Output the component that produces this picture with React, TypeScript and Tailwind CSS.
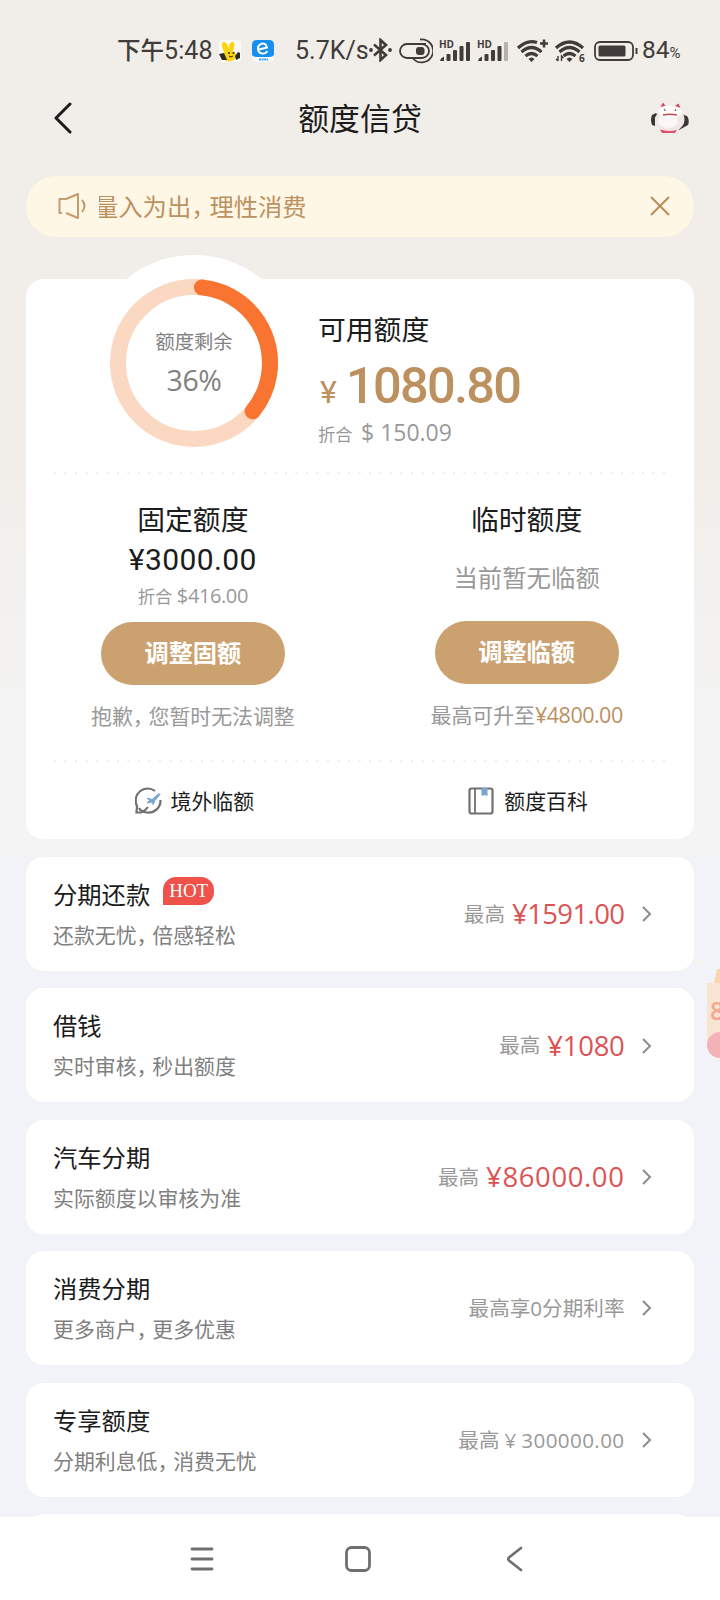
import { useState } from 'react'
import type { ReactNode } from 'react'

interface Product {
  id: string
  title: string
  desc: [string, string?]
  hot?: boolean
  amount?: string
  amountClass?: string
  note: ReactNode
}

const products: Product[] = [
  {
    id: 'installment',
    title: '分期还款',
    desc: ['还款无忧', '倍感轻松'],
    hot: true,
    amount: '1591.00',
    amountClass: 'tracking-[-0.6px]',
    note: '最高',
  },
  {
    id: 'loan',
    title: '借钱',
    desc: ['实时审核', '秒出额度'],
    amount: '1080',
    amountClass: 'tracking-[-0.3px]',
    note: '最高',
  },
  {
    id: 'car',
    title: '汽车分期',
    desc: ['实际额度以审核为准'],
    amount: '86000.00',
    amountClass: 'tracking-[0.6px]',
    note: '最高',
  },
  { id: 'shopping', title: '消费分期', desc: ['更多商户', '更多优惠'], note: '最高享0分期利率' },
  {
    id: 'exclusive',
    title: '专享额度',
    desc: ['分期利息低', '消费无忧'],
    note: (
      <>
        最高<span className="ml-[5px]">¥</span>
        <span className="ml-[5px] tracking-[0.4px]">300000.00</span>
      </>
    ),
  },
]

// Full-width comma set in a narrower cell
function Comma() {
  return <span className="mr-[0.25em] [font-feature-settings:'halt']">，</span>
}

function Signal({ weak = false }: { weak?: boolean }) {
  return (
    <svg className="overflow-visible" width="32" height="22" viewBox="0 0 32 22" fill="#413c39">
      <text x="0" y="7.5" fontSize="10" fontWeight="700" fontFamily="Open Sans" textLength="15">
        HD
      </text>
      <path d="M2 18.500l3-2v4.500h-4z" />
      <rect x="7.5" y="14" width="4" height="7" rx="1" />
      <rect x="14" y="10" width="4" height="11" rx="1" />
      <rect x="20.5" y="6" width="4" height="15" rx="1" />
      <rect x="27" y="2" width="4" height="19" rx="1" fill={weak ? '#b5b0ac' : '#413c39'} />
    </svg>
  )
}

function Wifi({ six = false }: { six?: boolean }) {
  return (
    <svg className="overflow-visible" width="32" height="24" viewBox="0 0 32 24" fill="none" stroke="#413c39" strokeWidth="3.2">
      <path d={six ? 'M1 9 Q14.500 -3 28 9' : 'M1 9 Q10.500 0 20 3.500'} />
      <path d="M4.500 13 Q14.500 4 24.500 13" />
      <path d="M8.500 17 Q14.500 12 20.500 17" />
      <path d="M11.500 20 Q14.500 17 17.500 20 L14.500 23Z" fill="#413c39" stroke="none" />
      {six ? (
        <>
          <path d="M3 17v5M1 20l2 2M6.500 22v-5l2 2" strokeWidth="1.400" />
          <text x="24" y="23" fontSize="10" fontWeight="700" fontFamily="Open Sans" fill="#413c39" stroke="none">
            6
          </text>
        </>
      ) : (
        <path d="M27 0.500v8M23 4.500h8" strokeWidth="2.600" />
      )}
    </svg>
  )
}

function StatusBar() {
  return (
    <div className="flex h-[74px] items-center pl-[117px] pt-[27px] font-['Roboto','Noto_Sans_CJK_SC',sans-serif] text-[#413c39]">
      <div className="w-[102px] whitespace-nowrap text-[23.5px] font-medium leading-6">
        下午<span className="text-[25px] font-normal tracking-[0.1px]">5:48</span>
      </div>
      <svg width="22" height="22" viewBox="0 0 22 22">
        <rect width="22" height="22" rx="4" fill="#fbfaf6" />
        <path d="M5 12 C2 5 2 2 5 2 C7.500 2 9 5 9.500 9 C10 4 11 2 13.500 2 C17 2 15 8 14 11 C17 13 19 16 15 20 C12 22 7 22 5 19 C3 17 4 14 5 12Z" fill="#fbd515" />
        <path d="M0 14 L5 13 L8 20 L3 20Z" fill="#2d2924" />
        <path d="M19 12 l2 1 v5 l-4 2 -1-4Z" fill="#2d2924" />
        <circle cx="10" cy="13" r="1" fill="#2d2924" />
        <circle cx="14.500" cy="13" r="1" fill="#2d2924" />
        <path d="M10 16 q2 2 4 0" stroke="#2d2924" fill="none" />
      </svg>
      <svg className="ml-[11px]" width="22" height="22" viewBox="0 0 22 22">
        <rect width="22" height="22" rx="5" fill="#f8fbff" />
        <path d="M0 5 Q0 0 5 0 H17 Q22 0 22 5 V14 Q22 17 17 17 H5 Q0 17 0 14Z" fill="#168fee" />
        <path d="M7 9.500 L15 7.500 C14 3 10 2.500 7.500 5 C4.500 8 6 13 10 13.500 C12.500 14 14.500 12.500 15.500 11" fill="none" stroke="#fff" strokeWidth="1.900" />
        <path d="M7 19.500h9" stroke="#38a3f3" strokeWidth="2" strokeDasharray="2 .6" />
      </svg>
      <div className="ml-[21px] w-[74px] whitespace-nowrap text-[25px] leading-6">5.7K/s</div>
      <svg className="mt-[-1px]" width="23" height="24" viewBox="0 0 23 24" fill="none" stroke="#413c39" strokeWidth="2.6">
        <path d="M5 6.500 L17 17 L11.500 22 V2 L17 7 L5 17.500" />
        <circle cx="2" cy="12" r="1.900" fill="#413c39" stroke="none" />
        <circle cx="21" cy="12" r="1.900" fill="#413c39" stroke="none" />
      </svg>
      <svg className="ml-[7px]" width="34" height="26" viewBox="0 0 34 26" fill="none" stroke="#413c39" strokeWidth="1.8">
        <path d="M27 6 H8 a7 7 0 0 0 0 14 H23 a7 7 0 0 0 0-14" />
        <path d="M21 1.500 a11.500 11.500 0 1 1 -7 19" />
        <rect x="17" y="9" width="8.500" height="8" rx="3" fill="#413c39" stroke="none" />
      </svg>
      <div className="ml-[6px] flex gap-[6px]">
        <Signal />
        <Signal weak />
      </div>
      <div className="ml-[8px] flex gap-[6px]">
        <Wifi />
        <Wifi six />
      </div>
      <svg className="ml-[7px]" width="46" height="20" viewBox="0 0 46 20" fill="none">
        <rect x="1" y="1" width="38" height="18" rx="5" stroke="#413c39" strokeWidth="1.8" />
        <rect x="4.500" y="4.500" width="27" height="11" rx="1.500" fill="#413c39" />
        <path d="M42.500 7v6" stroke="#413c39" strokeWidth="2" />
      </svg>
      <div className="ml-[2px] mt-[2px] whitespace-nowrap text-[24.5px] leading-6">
        84<span className="text-[15px]">%</span>
      </div>
    </div>
  )
}

function LuckyCat() {
  return (
    <svg width="40" height="32" viewBox="0 0 40 32">
      <path d="M6 11 L2 13 Q0 17 2 23 L5 24 V15 L8 13Z" fill="#3a3739" />
      <path d="M31 12 L37 14 Q40 18 38 23 L29 28 L28 25 L34 21 V17Z" fill="#3a3739" />
      <ellipse cx="20" cy="17.500" rx="14.500" ry="12.500" fill="#f0e6e3" />
      <path d="M10 9 L12 1 L17 4 L25 4 L29 2 L31 10Z" fill="#faf5f4" />
      <path d="M10.500 5 L13 0.500 L15.500 4Z M25 4 L28.500 1.500 L30.500 6Z" fill="#d64563" />
      <ellipse cx="20" cy="10" rx="12" ry="6.500" fill="#fdfafa" />
      <ellipse cx="18" cy="19" rx="10" ry="7" fill="#fbf7f6" />
      <path d="M13 13 Q20 11.500 27 13" fill="none" stroke="#c04c57" strokeWidth="1.300" />
      <path d="M14 7.500l1.500 1M26 7.500l-1 1.200" stroke="#4b4346" strokeWidth="1.200" />
      <path d="M10 27.500 Q18 30 27 28 L25 31 H12Z" fill="#e0526c" />
    </svg>
  )
}

function Divider() {
  return (
    <svg className="mx-auto block" width="616" height="2">
      <path d="M2 1h612" stroke="#eeeeee" strokeWidth="2" strokeDasharray="2 8.500" />
    </svg>
  )
}

// Progress ring: 0deg is 12 o'clock, the arc runs clockwise
function Ring({ from, to }: { from: number; to: number }) {
  const point = (deg: number) => {
    const a = (deg * Math.PI) / 180
    return `${84 + 76 * Math.sin(a)} ${84 - 76 * Math.cos(a)}`
  }
  return (
    <svg className="col-start-1 row-start-1" width="168" height="168" fill="none" strokeWidth="16">
      <circle cx="84" cy="84" r="76" stroke="#fbd8c1" />
      <path d={`M${point(from)} A76 76 0 0 1 ${point(to)}`} stroke="#f97331" strokeLinecap="round" />
    </svg>
  )
}

function CreditCard() {
  return (
    <section className="mt-[42px] h-[560px] rounded-[18px] bg-white">
      <div className="flex h-[193px]">
        <div className="ml-[60px] mt-[-24px] grid size-[216px] shrink-0 place-items-center rounded-full bg-white">
          <Ring from={6} to={129.5} />
          <div className="col-start-1 row-start-1 -mt-[3px] text-center text-[#818181]">
            <div className="text-[19.3px] leading-6">额度剩余</div>
            <div className="mt-[12px] text-[28.5px] leading-7 tracking-[-0.4px]">36%</div>
          </div>
        </div>
        <div className="ml-[16px] whitespace-nowrap pt-[35px]">
          <div className="text-[27.8px] leading-[30px] text-[#1c1c1c]">可用额度</div>
          <div className="mt-[14px] flex h-[56px] items-baseline font-['Roboto',sans-serif] font-medium leading-[56px] text-[#bc905f]">
            <span className="w-[28px] pl-[2px] text-[32px] font-normal">¥</span>
            <span className="text-[50.5px] tracking-[-1.7px]">1080.80</span>
          </div>
          <div className="mt-[4px] flex items-baseline leading-[28px] text-[#999]">
            <span className="w-[43px] text-[17.3px]">折合</span>
            <span className="text-[23px]">$ 150.09</span>
          </div>
        </div>
      </div>
      <Divider />
      <div className="grid h-[286px] grid-cols-2 whitespace-nowrap text-center">
        <div className="flex flex-col items-center pt-[30px]">
          <div className="text-[27.8px] leading-[30px] text-[#1c1c1c]">固定额度</div>
          <div className="mt-[9px] font-['Roboto',sans-serif] text-[30px] leading-[34px] tracking-[0.4px] text-[#1c1c1c]">
            ¥3000.00
          </div>
          <div className="mt-[6px] text-[17.3px] leading-[26px] text-[#999]">
            折合 <span className="text-[20px] tracking-[-0.4px]">$416.00</span>
          </div>
          <button className="mt-[12px] h-[63px] w-[184px] rounded-full bg-[#cba170] text-[24.2px] font-bold text-white">
            调整固额
          </button>
          <div className="mt-[18px] text-[20.9px] leading-[26px] text-[#999]">
            抱歉
            <Comma />
            您暂时无法调整
          </div>
        </div>
        <div className="flex flex-col items-center pt-[30px]">
          <div className="text-[27.8px] leading-[30px] text-[#1c1c1c]">临时额度</div>
          <div className="mt-[29px] text-[24.4px] leading-[30px] text-[#999]">当前暂无临额</div>
          <button className="mt-[28px] h-[63px] w-[184px] rounded-full bg-[#cba170] text-[24.2px] font-bold text-white">
            调整临额
          </button>
          <div className="mt-[18px] text-[20.9px] leading-[26px] text-[#999]">
            最高可升至<span className="text-[21.5px] tracking-[-0.5px] text-[#bc905f]">¥4800.00</span>
          </div>
        </div>
      </div>
      <Divider />
      <div className="grid h-[77px] grid-cols-2 pl-[2px] pt-px text-[20.9px] leading-none text-[#1c1c1c]">
        <div className="flex items-center justify-center gap-[9px]">
          <svg width="27" height="28" viewBox="0 0 27 28" fill="none" stroke="#707070" strokeWidth="2.2">
            <path d="M20 4 A12 12 0 0 0 2 19 L1.500 25.500 H6 Q11 23 13 20" />
            <path d="M4 21 Q6 25 12 25.500 A12 12 0 0 0 25.500 13" />
            <path d="M12 11 l5 1.500 7-6 1 1-5 6-2 4-1.500-2.500-4.500 1 2.500-2.500Z" fill="#7aa7cf" stroke="#7aa7cf" strokeWidth="1" />
          </svg>
          境外临额
        </div>
        <div className="flex items-center justify-center gap-[10px] pl-[2px]">
          <svg width="26" height="28" viewBox="0 0 26 28" fill="none" stroke="#707070" strokeWidth="2.2">
            <rect x="1.500" y="1.500" width="23" height="25" rx="2" />
            <path d="M7 2v24" strokeWidth="1.800" />
            <path d="M13.500 1h6v8l-3-1-3 1Z" fill="#7aa7cf" stroke="none" />
          </svg>
          额度百科
        </div>
      </div>
    </section>
  )
}

function ProductRow({ product }: { product: Product }) {
  return (
    <div className="flex h-[114px] shrink-0 items-center justify-between whitespace-nowrap rounded-[18px] bg-white pl-[27px] pr-[42px]">
      <div>
        <div className="flex h-[34px] items-center pt-px text-[24.3px] text-[#1c1c1c]">
          {product.title}
          {product.hot && (
            <span className="mb-[8px] ml-[13px] flex h-[28px] w-[51px] items-center justify-center rounded-[13px] rounded-bl-none bg-[#ee524b] pt-px font-['Liberation_Serif',serif] text-[19px] text-white">
              HOT
            </span>
          )}
        </div>
        <div className="mt-[8px] text-[20.9px] leading-[30px] text-[#808080]">
          {product.desc[0]}
          {product.desc[1] && <Comma />}
          {product.desc[1]}
        </div>
      </div>
      <div className="flex items-center pt-px">
        <div className="flex items-center text-[20.6px] text-[#999]">
          {product.note}
          {product.amount && (
            <span className={`ml-[7px] text-[27.5px] leading-8 text-[#dd5353] ${product.amountClass}`}>¥{product.amount}</span>
          )}
        </div>
        <svg className="ml-[17px]" width="10" height="16" fill="none" stroke="#8c8c8c" strokeWidth="2">
          <path d="M1 1l7 7-7 7" />
        </svg>
      </div>
    </div>
  )
}

export default function App() {
  const [showNotice, setShowNotice] = useState(true)

  return (
    <main className="relative flex h-[1600px] w-[720px] flex-col overflow-hidden bg-[linear-gradient(#f1ede8_0px,#f1ede8_400px,#f4f4f4_740px,#f4f4f4_850px,#f2f3f8_862px)] font-['Open_Sans','Noto_Sans_CJK_SC',sans-serif]">
      <StatusBar />
      <header className="grid h-[88px] grid-cols-[1fr_auto_1fr] items-center pl-[53px] pr-[30px]">
        <svg width="20" height="32" fill="none" stroke="#1c1c1c" strokeWidth="3" strokeLinecap="round" strokeLinejoin="round">
          <path d="M17 2L3 16l14 14" />
        </svg>
        <h1 className="-ml-[23px] text-[30.9px] leading-none text-[#1c1c1c]">额度信贷</h1>
        <div className="justify-self-end">
          <LuckyCat />
        </div>
      </header>

      <div className="ml-[26px] mr-[26.500px] mt-[13.500px] flex h-[1341px] flex-col overflow-hidden">
        {showNotice && (
          <div className="flex h-[61.500px] shrink-0 items-center rounded-full bg-[#fff7e5] pl-[32px] pr-[24px] text-[24.3px] text-[#bb9162]">
            <svg width="30" height="28" viewBox="0 0 30 28" fill="none" stroke="#c39c70" strokeWidth="2">
              <path d="M4 21H1.500V7H8L20 2V26L8 21" strokeLinejoin="round" />
              <path d="M24 8q5 6 0 12" />
            </svg>
            <div className="ml-[11px] flex-1 overflow-hidden whitespace-nowrap pt-px">
              <span className="-ml-[5px]">量入为出</span>
              <Comma />
              理性消费
            </div>
            <button onClick={() => setShowNotice(false)}>
              <svg width="20" height="20" fill="none" stroke="#b98e5c" strokeWidth="2">
                <path d="M1 1l18 18M19 1L1 19" />
              </svg>
            </button>
          </div>
        )}
        <CreditCard />
        <div className="mt-[17.500px] flex flex-col gap-[17.500px]">
          {products.map((product) => (
            <ProductRow key={product.id} product={product} />
          ))}
          <div className="h-[114px] shrink-0 rounded-[18px] bg-white" />
        </div>
      </div>

      {/* Floating promo, mostly off the right edge */}
      <svg className="absolute right-0 top-[955px]" width="30" height="110" viewBox="0 0 30 110">
        <circle cx="10" cy="7" r="4" fill="#f7f3f0" />
        <path d="M24 28 L27 14 H30 V28Z" fill="#fbd5ab" />
        <path d="M17 28 H30 V88 H17Z" fill="#f9e4d1" />
        <text x="20" y="65" fontSize="25" fontWeight="600" fill="#f2a893">
          8
        </text>
        <circle cx="30" cy="90" r="13" fill="#f3b2b6" />
      </svg>

      <nav className="flex flex-1 items-center bg-white pl-[190px] pt-px">
        <svg width="24" height="24" stroke="#6f6f6f" strokeWidth="2.8" strokeLinecap="round">
          <path d="M2 2h20M2 12h20M2 22h20" />
        </svg>
        <svg className="ml-[131px]" width="26" height="26" fill="none" stroke="#6f6f6f" strokeWidth="2.8">
          <rect x="1.500" y="1.500" width="23" height="23" rx="5" />
        </svg>
        <svg className="ml-[135px]" width="18" height="26" fill="none" stroke="#6f6f6f" strokeWidth="2.6" strokeLinecap="round">
          <path d="M15 2L3 11.500q-1.500 1.500 0 3L15 24" />
        </svg>
      </nav>
    </main>
  )
}
